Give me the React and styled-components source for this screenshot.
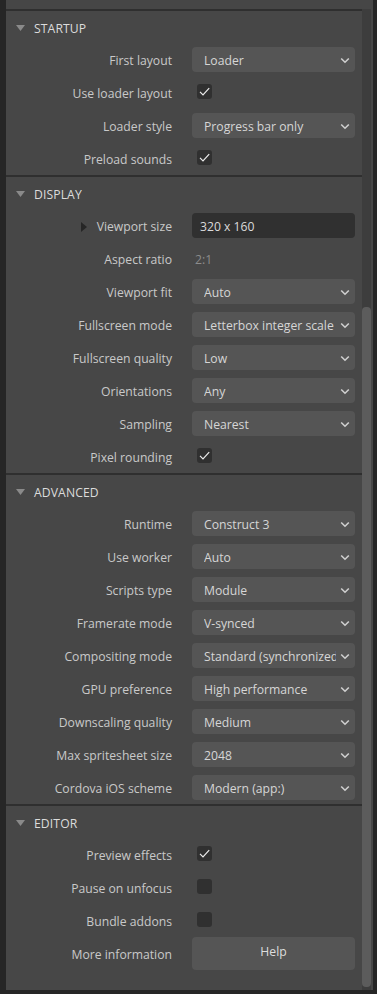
import React from 'react';
import styled, { createGlobalStyle } from 'styled-components';

const Global = createGlobalStyle`
  html, body { margin: 0; padding: 0; background: #252525; }
  body { font-family: "Open Sans", "Noto Sans", sans-serif; -webkit-font-smoothing: antialiased; }
  * { box-sizing: border-box; }
`;

const Frame = styled.div`
  width: 377px;
  height: 994px;
  padding-left: 6px;
  background: #262626;
  overflow: hidden;
`;

const Panel = styled.div`
  width: 367px;
  height: 990px;
  background: #474747;
  display: flex;
  flex-direction: column;
`;

const TopStrip = styled.div`
  height: 9px;
  flex: none;
  background: #464646;
`;

const Body = styled.div`
  flex: 1;
  display: flex;
  min-height: 0;
`;

const Content = styled.div`
  flex: 1;
  display: flex;
  flex-direction: column;
`;

const Track = styled.div`
  width: 9px;
  margin-right: 2px;
  background: #3d3d3d;
  display: flex;
  flex-direction: column;
  padding-top: ${p => p.$offset}px;
`;

const Thumb = styled.div`
  width: 9px;
  background: #5c5c5c;
  border-radius: 4px;
`;

const Section = styled.section`
  display: flex;
  flex-direction: column;
  padding-bottom: ${p => (p.$last ? 20 : 0)}px;
`;

const Separator = styled.div`
  height: 2px;
  background: #2f2f2f;
`;

const Header = styled.div`
  height: 32px;
  display: flex;
  align-items: center;
  gap: 9px;
  padding: 2px 0 0 10px;
  color: #dcdcdc;
  font-size: 12.2px;
  letter-spacing: 0.1px;
`;

const Row = styled.div`
  height: 33px;
  display: grid;
  grid-template-columns: 166px 163px;
  column-gap: 20px;
  align-items: center;
`;

const Label = styled.div`
  display: flex;
  justify-content: flex-end;
  align-items: center;
  gap: 10px;
  padding-top: 2px;
  color: #c9c9c9;
  font-size: 12.2px;
  white-space: nowrap;
`;

const SelectBox = styled.div`
  height: 25px;
  border-radius: 4px;
  background: #555555;
  display: flex;
  align-items: center;
  padding: 1px 5px 0 12px;
  gap: 4px;
  color: #d6d6d6;
  font-size: 12.2px;
`;

const SelectText = styled.span`
  flex: 1;
  overflow: hidden;
  white-space: nowrap;
`;

const TextInput = styled.div`
  height: 25px;
  border-radius: 4px;
  background: #303030;
  display: flex;
  align-items: center;
  padding: 1px 8px 0;
  color: #dadada;
  font-size: 12.2px;
`;

const Static = styled.div`
  padding: 2px 0 0 3px;
  color: #8c8c8c;
  font-size: 12.2px;
`;

const Box = styled.div`
  width: 15px;
  height: 15px;
  margin: 0 0 3px 5px;
  border-radius: 3px;
  background: #303030;
  display: flex;
  align-items: center;
  justify-content: center;
`;

const Button = styled.div`
  height: 33px;
  border-radius: 4px;
  background: #555555;
  display: flex;
  align-items: center;
  justify-content: center;
  padding-bottom: 5px;
  color: #dedede;
  font-size: 12.2px;
`;

const Chevron = () => (
  <svg width="10" height="7" viewBox="0 0 10 7">
    <path d="M1.2 1.5 L5 5.2 L8.8 1.5" fill="none" stroke="#d0d0d0" strokeWidth="1.6" />
  </svg>
);

const Check = () => (
  <svg width="15" height="15" viewBox="0 0 15 15">
    <path d="M3 7.8 L6 10.8 L12.2 4.2" fill="none" stroke="#ececec" strokeWidth="1.2" />
  </svg>
);

const DownTri = () => (
  <svg width="9" height="6" viewBox="0 0 9 6">
    <path d="M0 0 L9 0 L4.5 6 Z" fill="#8a8a8a" />
  </svg>
);

const RightTri = () => (
  <svg width="6" height="10" viewBox="0 0 6 10">
    <path d="M0 0 L6 5 L0 10 Z" fill="#262626" />
  </svg>
);

const Select = ({ value }) => (
  <SelectBox>
    <SelectText>{value}</SelectText>
    <Chevron />
  </SelectBox>
);

const Control = ({ item }) => {
  switch (item.type) {
    case 'select':
      return <Select value={item.value} />;
    case 'check':
      return <Box>{item.value ? <Check /> : null}</Box>;
    case 'input':
      return <TextInput>{item.value}</TextInput>;
    case 'static':
      return <Static>{item.value}</Static>;
    case 'button':
      return <Button>{item.value}</Button>;
    default:
      return null;
  }
};

const sections = [
  {
    title: 'STARTUP',
    rows: [
      { label: 'First layout', type: 'select', value: 'Loader' },
      { label: 'Use loader layout', type: 'check', value: true },
      { label: 'Loader style', type: 'select', value: 'Progress bar only' },
      { label: 'Preload sounds', type: 'check', value: true },
    ],
  },
  {
    title: 'DISPLAY',
    rows: [
      { label: 'Viewport size', type: 'input', value: '320 x 160', expander: true },
      { label: 'Aspect ratio', type: 'static', value: '2:1' },
      { label: 'Viewport fit', type: 'select', value: 'Auto' },
      { label: 'Fullscreen mode', type: 'select', value: 'Letterbox integer scale' },
      { label: 'Fullscreen quality', type: 'select', value: 'Low' },
      { label: 'Orientations', type: 'select', value: 'Any' },
      { label: 'Sampling', type: 'select', value: 'Nearest' },
      { label: 'Pixel rounding', type: 'check', value: true },
    ],
  },
  {
    title: 'ADVANCED',
    rows: [
      { label: 'Runtime', type: 'select', value: 'Construct 3' },
      { label: 'Use worker', type: 'select', value: 'Auto' },
      { label: 'Scripts type', type: 'select', value: 'Module' },
      { label: 'Framerate mode', type: 'select', value: 'V-synced' },
      { label: 'Compositing mode', type: 'select', value: 'Standard (synchronized)' },
      { label: 'GPU preference', type: 'select', value: 'High performance' },
      { label: 'Downscaling quality', type: 'select', value: 'Medium' },
      { label: 'Max spritesheet size', type: 'select', value: '2048' },
      { label: 'Cordova iOS scheme', type: 'select', value: 'Modern (app:)' },
    ],
  },
  {
    title: 'EDITOR',
    rows: [
      { label: 'Preview effects', type: 'check', value: true },
      { label: 'Pause on unfocus', type: 'check', value: false },
      { label: 'Bundle addons', type: 'check', value: false },
      { label: 'More information', type: 'button', value: 'Help' },
    ],
  },
];

export default function App() {
  return (
    <>
      <Global />
      <Frame>
        <Panel>
          <TopStrip />
          <Body>
            <Content>
              {sections.map((s, i) => (
                <Section key={s.title} $last={i === sections.length - 1}>
                  <Separator />
                  <Header>
                    <DownTri />
                    <span>{s.title}</span>
                  </Header>
                  {s.rows.map(r => (
                    <Row key={r.label}>
                      <Label>
                        {r.expander ? <RightTri /> : null}
                        <span>{r.label}</span>
                      </Label>
                      <Control item={r} />
                    </Row>
                  ))}
                </Section>
              ))}
            </Content>
            <Track $offset={298}>
              <Thumb style={{ height: 680 }} />
            </Track>
          </Body>
        </Panel>
      </Frame>
    </>
  );
}
